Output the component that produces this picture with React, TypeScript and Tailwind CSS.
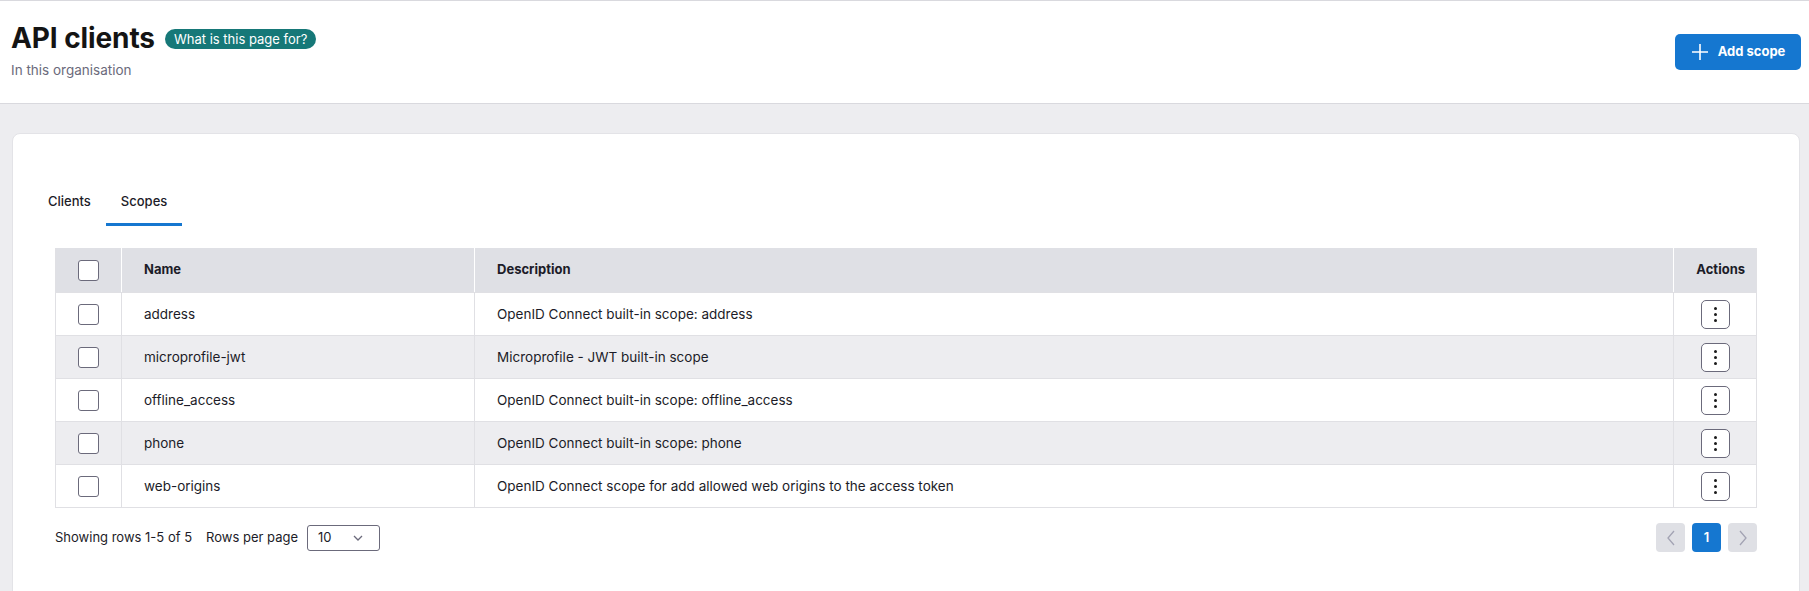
import React from "react";

const rows = [
  { name: "address", desc: "OpenID Connect built-in scope: address" },
  { name: "microprofile-jwt", desc: "Microprofile - JWT built-in scope" },
  { name: "offline_access", desc: "OpenID Connect built-in scope: offline_access" },
  { name: "phone", desc: "OpenID Connect built-in scope: phone" },
  { name: "web-origins", desc: "OpenID Connect scope for add allowed web origins to the access token" },
];

function Checkbox() {
  return <div className="w-[21px] h-[21px] rounded-[3px] border-[1.5px] border-[#6b6a7b] bg-white" />;
}

function Kebab() {
  return (
    <div className="w-[29px] h-[29px] rounded-[5px] border border-[#6b6a7b] bg-white flex flex-col items-center justify-center gap-[3px]">
      <span className="w-[3px] h-[3px] rounded-full bg-[#1a1a1a]" />
      <span className="w-[3px] h-[3px] rounded-full bg-[#1a1a1a]" />
      <span className="w-[3px] h-[3px] rounded-full bg-[#1a1a1a]" />
    </div>
  );
}

export default function App() {
  return (
    <div className="min-h-screen bg-[#ededf0] text-[#1c1c28]" style={{ fontFamily: "Inter, 'Open Sans', sans-serif" }}>
      <header className="bg-white border-t border-b border-[#d9d9de] h-[104px] flex items-start justify-between">
        <div className="pl-[11px] pt-[21px]">
          <div className="flex items-center gap-[10px]">
            <h1 className="text-[28px] font-bold leading-[33px] text-[#141414] tracking-[-0.1px]">API clients</h1>
            <span className="bg-[#167878] text-white text-[13px] leading-[20px] px-[9px] rounded-full">What is this page for?</span>
          </div>
          <div className="text-[13.5px] text-[#6b6a7b] mt-[5px]">In this organisation</div>
        </div>
        <button className="mt-[33px] mr-[8px] w-[126px] h-[36px] rounded-[5px] bg-[#1577d0] text-white flex items-center justify-center gap-[9px] text-[13px] font-bold">
          <svg width="18" height="18" viewBox="0 0 18 18" fill="none" stroke="white" strokeWidth="1.6">
            <path d="M9 1v16M1 9h16" />
          </svg>
          Add scope
        </button>
      </header>
      <main className="pt-[29px] pl-[12px] pr-[9px]">
        <div className="bg-white rounded-t-[8px] border border-[#e3e3e7] pt-[44px] pb-[60px]">
          <div className="flex pl-[20px] text-[13px] font-medium">
            <div className="px-[15px] h-[48px] flex items-center">Clients</div>
            <div className="px-[15px] h-[48px] flex items-center border-b-[3px] border-[#1577d0] pt-[3px]">Scopes</div>
          </div>
          <div className="mx-[42px] mt-[22px] border-l border-r border-b border-[#e0e0e4] text-[13.5px]">
            <div className="flex h-[44px] bg-[#dfe0e5] font-bold text-[13px]">
              <div className="w-[66px] flex items-center justify-center border-r border-white"><Checkbox /></div>
              <div className="w-[353px] flex items-center pl-[22px] border-r border-white">Name</div>
              <div className="flex-1 flex items-center pl-[22px] border-r border-white">Description</div>
              <div className="w-[82px] flex items-center justify-end pr-[11px]">Actions</div>
            </div>
            {rows.map((r, i) => (
              <div key={r.name} className={`flex h-[43px] border-t border-[#e0e0e4] ${i % 2 === 1 ? "bg-[#ededf0]" : "bg-white"}`}>
                <div className="w-[66px] flex items-center justify-center border-r border-[#e0e0e4]"><Checkbox /></div>
                <div className="w-[353px] flex items-center pl-[22px] border-r border-[#e0e0e4]">{r.name}</div>
                <div className="flex-1 flex items-center pl-[22px] border-r border-[#e0e0e4]">{r.desc}</div>
                <div className="w-[82px] flex items-center justify-center pl-[1px]"><Kebab /></div>
              </div>
            ))}
          </div>
          <div className="mx-[42px] mt-[15px] flex items-center justify-between text-[13px]">
            <div className="flex items-center">
              <span>Showing rows 1-5 of 5</span>
              <span className="ml-[14px]">Rows per page</span>
              <div className="ml-[9px] w-[73px] h-[26px] rounded-[3px] border border-[#6b6a7b] flex items-center justify-between pl-[10px] pr-[16px]">
                <span>10</span>
                <svg width="10" height="6" viewBox="0 0 10 6" fill="none" stroke="#6b6a7b" strokeWidth="1.3"><path d="M1 1l4 4 4-4" /></svg>
              </div>
            </div>
            <div className="flex items-center gap-[7px]">
              <div className="w-[29px] h-[29px] rounded-[4px] bg-[#dfe0e5] flex items-center justify-center">
                <svg width="10" height="16" viewBox="0 0 10 16" fill="none" stroke="#a3a3b3" strokeWidth="1.3"><path d="M8 1L2 8l6 7" /></svg>
              </div>
              <div className="w-[29px] h-[29px] rounded-[4px] bg-[#1577d0] text-white flex items-center justify-center font-semibold">1</div>
              <div className="w-[29px] h-[29px] rounded-[4px] bg-[#dfe0e5] flex items-center justify-center">
                <svg width="10" height="16" viewBox="0 0 10 16" fill="none" stroke="#a3a3b3" strokeWidth="1.3"><path d="M2 1l6 7-6 7" /></svg>
              </div>
            </div>
          </div>
        </div>
      </main>
    </div>
  );
}
